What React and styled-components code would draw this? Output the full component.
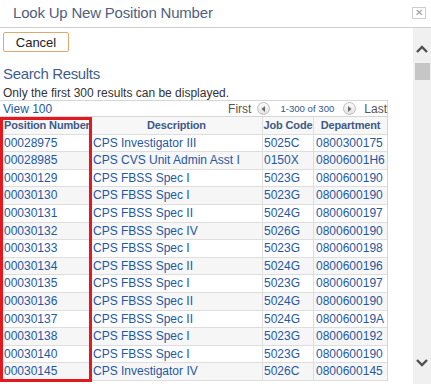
import React from 'react';
import styled, { createGlobalStyle } from 'styled-components';

const Global = createGlobalStyle`
  html, body { margin: 0; padding: 0; background: #fff; }
  body {
    font-family: "Liberation Sans", Arial, sans-serif;
    width: 431px; height: 384px; overflow: hidden;
  }
  * { box-sizing: border-box; }
`;

const Dialog = styled.div`
  width: 431px; height: 384px;
  display: flex; flex-direction: column; overflow: hidden;
`;

const Header = styled.div`
  height: 28px; flex: none;
  border-bottom: 1px solid #cfcfcf;
  display: flex; align-items: center; justify-content: space-between;
  padding: 0 5px 1px 13px;
`;

const Title = styled.div`
  font-size: 15px; letter-spacing: -0.2px; color: #4f5f80; line-height: 18px;
`;

const CloseBtn = styled.div`
  width: 14px; height: 12px;
  border: 1px solid #cdcdcd;
  display: flex; align-items: center; justify-content: center;
  font-size: 10px; line-height: 10px; color: #999;
`;

const Body = styled.div`
  flex: 1; min-height: 0;
  display: flex;
`;

const Content = styled.div`
  flex: 1; min-width: 0; overflow: hidden;
  padding-top: 4px;
`;

const CancelButton = styled.button`
  display: block;
  margin-left: 3px;
  width: 66px; height: 20px;
  border: 1px solid #e0a86f; border-radius: 2px;
  background: #fff; padding: 0;
  font-family: inherit; font-size: 13px; color: #222;
`;

const SectionTitle = styled.div`
  margin-top: 13px; padding-left: 3px;
  font-size: 15px; letter-spacing: -0.35px; line-height: 18px; color: #3f5e8e;
`;

const Info = styled.div`
  margin-top: 3px; padding-left: 3px;
  font-size: 12px; line-height: 14px; color: #333;
`;

const GridBox = styled.div`
  position: relative;
  width: 388px;
  border-top: 1px solid #d6d6d6;
  border-right: 1px solid #d6d6d6;
`;

const NavBar = styled.div`
  height: 16px;
  display: flex; align-items: center;
  padding-left: 3px;
  border-bottom: 1px solid #d6d6d6;
`;

const LinkText = styled.span`
  font-size: 12px; color: #2557a0;
`;

const NavGroup = styled.div`
  margin-left: auto;
  display: flex; align-items: center;
`;

const NavLabel = styled.span`
  font-size: 12px; color: #555;
  margin: ${p => p.$m || '0'};
`;

const Count = styled.span`
  font-size: 9.6px; color: #34578a;
  margin: 0 9px 0 10px;
`;

const CircleBtn = styled.span`
  width: 13px; height: 13px; border-radius: 50%;
  border: 1px solid #bdbdbd;
  background: linear-gradient(#fbfbfb, #e2e2e2);
  display: inline-flex; align-items: center; justify-content: center;
  margin-left: ${p => p.$ml || '0'};
`;

const Row = styled.div`
  display: grid;
  grid-template-columns: 91px 172px 51px 1fr;
  height: 17.6px;
  border-bottom: 1px solid #dedede;
  background: ${p => (p.$head ? '#f7f7f7' : p.$alt ? '#f6f6f6' : '#fff')};
`;

const Cell = styled.div`
  border-right: ${p => (p.$last ? 'none' : '1px solid #dedede')};
  padding-left: ${p => p.$pl || '2px'};
  font-size: 12px; line-height: 16.6px;
  color: #1f58a3;
  white-space: nowrap; overflow: hidden;
`;

const HeadCell = styled.div`
  border-right: ${p => (p.$last ? 'none' : '1px solid #dedede')};
  padding-left: ${p => p.$pl || '0'};
  text-align: ${p => p.$align || 'center'};
  font-size: 11px; font-weight: bold; letter-spacing: -0.15px;
  line-height: 16.6px; color: #3d5a86;
  white-space: nowrap; overflow: hidden;
`;

const Highlight = styled.div`
  position: absolute;
  left: 0; top: 16px;
  width: 92px; height: 265px;
  border: 3px solid #e3191f;
  pointer-events: none;
`;

const ScrollBar = styled.div`
  width: 18px; flex: none;
  background: #f0f0f0;
  display: flex; flex-direction: column; align-items: center;
  padding: 17px 0 17px;
`;

const Thumb = styled.div`
  width: 15px; height: 17px;
  background: #c6c6c6;
  margin-top: 10px;
`;

const Spacer = styled.div` flex: 1; `;

const Chevron = ({ up }) => (
  <svg width="12" height="8" viewBox="0 0 12 8">
    <polyline
      points={up ? '1,7 6,2 11,7' : '1,1 6,6 11,1'}
      fill="none" stroke="#505050" strokeWidth="2.4"
    />
  </svg>
);

const Tri = ({ left }) => (
  <svg width="5" height="6" viewBox="0 0 5 6">
    <polygon points={left ? '4,0 4,6 0.5,3' : '1,0 1,6 4.5,3'} fill="#6a6a6a" />
  </svg>
);

const rows = [
  ['00028975', 'CPS Investigator III', '5025C', '0800300175'],
  ['00028985', 'CPS CVS Unit Admin Asst I', '0150X', '08006001H6'],
  ['00030129', 'CPS FBSS Spec I', '5023G', '0800600190'],
  ['00030130', 'CPS FBSS Spec I', '5023G', '0800600190'],
  ['00030131', 'CPS FBSS Spec II', '5024G', '0800600197'],
  ['00030132', 'CPS FBSS Spec IV', '5026G', '0800600190'],
  ['00030133', 'CPS FBSS Spec I', '5023G', '0800600198'],
  ['00030134', 'CPS FBSS Spec II', '5024G', '0800600196'],
  ['00030135', 'CPS FBSS Spec I', '5023G', '0800600197'],
  ['00030136', 'CPS FBSS Spec II', '5024G', '0800600190'],
  ['00030137', 'CPS FBSS Spec II', '5024G', '080060019A'],
  ['00030138', 'CPS FBSS Spec I', '5023G', '0800600192'],
  ['00030140', 'CPS FBSS Spec I', '5023G', '0800600190'],
  ['00030145', 'CPS Investigator IV', '5026C', '0800600145'],
];

export default function App() {
  return (
    <Dialog>
      <Global />
      <Header>
        <Title>Look Up New Position Number</Title>
        <CloseBtn>✕</CloseBtn>
      </Header>
      <Body>
        <Content>
          <CancelButton>Cancel</CancelButton>
          <SectionTitle>Search Results</SectionTitle>
          <Info>Only the first 300 results can be displayed.</Info>
          <GridBox>
            <NavBar>
              <LinkText>View 100</LinkText>
              <NavGroup>
                <NavLabel>First</NavLabel>
                <CircleBtn $ml="6px"><Tri left /></CircleBtn>
                <Count>1-300 of 300</Count>
                <CircleBtn><Tri /></CircleBtn>
                <NavLabel $m="0 0 0 8px">Last</NavLabel>
              </NavGroup>
            </NavBar>
            <Row $head>
              <HeadCell $align="left" $pl="4px">Position Number</HeadCell>
              <HeadCell>Description</HeadCell>
              <HeadCell>Job Code</HeadCell>
              <HeadCell $last>Department</HeadCell>
            </Row>
            {rows.map((r, i) => (
              <Row key={r[0]} $alt={i % 2 === 1}>
                <Cell $pl="4px">{r[0]}</Cell>
                <Cell>{r[1]}</Cell>
                <Cell $pl="1px">{r[2]}</Cell>
                <Cell $last>{r[3]}</Cell>
              </Row>
            ))}
            <Highlight />
          </GridBox>
        </Content>
        <ScrollBar>
          <Chevron up />
          <Thumb />
          <Spacer />
          <Chevron />
        </ScrollBar>
      </Body>
    </Dialog>
  );
}
